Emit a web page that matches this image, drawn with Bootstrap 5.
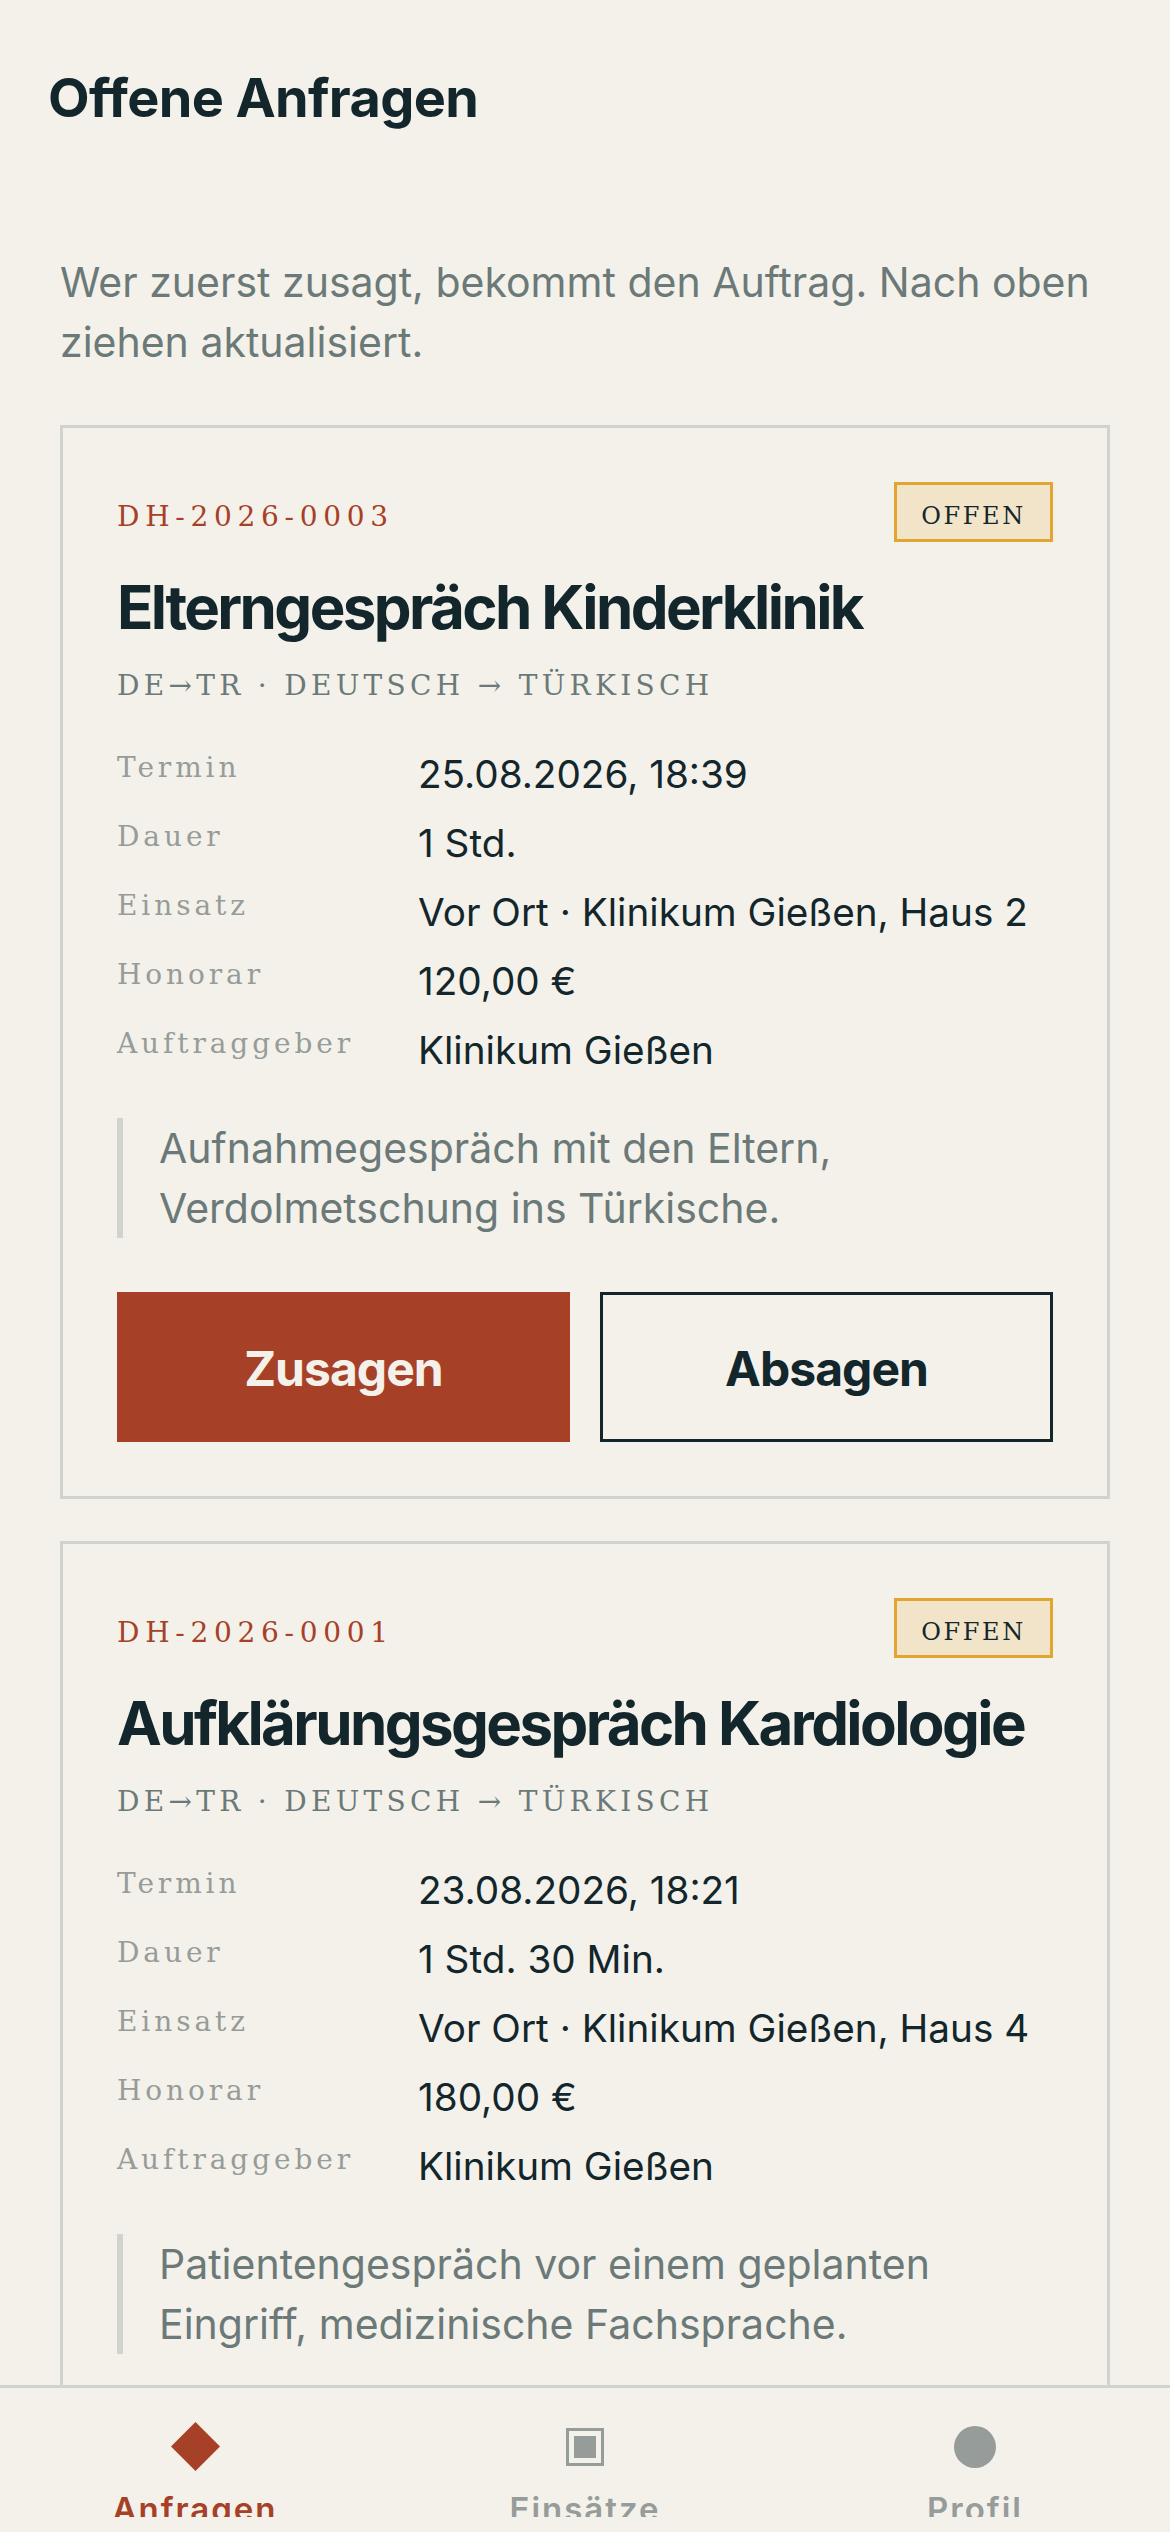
<!doctype html>
<html lang="de">
<head>
<meta charset="utf-8">
<title>Offene Anfragen</title>
<link href="https://cdn.jsdelivr.net/npm/bootstrap@5.3.0/dist/css/bootstrap.min.css" rel="stylesheet">
<style>
html,body{height:2532px;overflow:hidden;background:#f4f1ea}
body{font-family:Inter,"Liberation Sans",sans-serif;color:#12262b}
.app-shell{height:2532px}
.app-main{min-height:0;overflow:hidden}
.page-head{padding:66px 48px 0;height:192px}
.page-title{font-size:54px;font-weight:700;line-height:64px;margin:0;letter-spacing:-.012em}
.intro-text{font-size:41px;line-height:60px;color:#6b7a78;margin:60px 60px 0}
.job-list{margin:53px 60px 0;gap:42px}
.job-card{border:3px solid #d0d4cd;padding:54px;background:transparent}
.mono{font-family:"DejaVu Serif","Liberation Mono",monospace}
.job-code{font-size:28px;letter-spacing:5.7px;color:#a64027;margin-top:9px}
.status-tag{font-size:24px;letter-spacing:2.6px;border:3px solid #e0a630;background:#f2e4c8;height:60px;width:159px;color:#12262b;padding-top:8px}
.job-title{font-size:60px;font-weight:700;letter-spacing:-2.6px;line-height:72px;margin:29px 0 0}
.job-lang{font-size:28px;letter-spacing:4.3px;color:#6b7a78;margin-top:25px;line-height:36px}
.facts{display:grid;grid-template-columns:301px 1fr;row-gap:15px;margin:43px 0 0}
.facts dt{font-family:"DejaVu Serif","Liberation Mono",monospace;font-weight:400;font-size:28px;letter-spacing:3.9px;color:#969c99;line-height:54px;margin-top:-6px}
.facts dd{font-size:38.7px;line-height:54px;margin:0;color:#12262b}
.job-note{border-left:6px solid #d0d4cd;padding-left:36px;font-size:41px;line-height:60px;color:#6b7a78;margin:41px 0 0}
.job-actions{gap:30px;margin-top:54px}
.act-btn{flex:1 1 0;height:150px;border-radius:0;font-size:48px;font-weight:700;letter-spacing:-.02em;border:3px solid #12262b;padding:3px 0 0}
.act-yes,.act-yes:hover{background:#a64027;border-color:#a64027;color:#f4f1ea}
.act-no,.act-no:hover{background:transparent;color:#12262b}
.tab-bar{flex:0 0 147px;border-top:3px solid #d0d4cd;padding-bottom:15px;background:#f4f1ea}
.tab-clip{height:129px;overflow:hidden}
.tab-item{flex:1 1 0;color:#969c99;font-size:33px;font-weight:600;letter-spacing:.06em;padding-top:34px;text-decoration:none}
.tab-item.on{color:#a64027}
.tab-ico{height:49px;display:flex;align-items:center;justify-content:center}
.tab-label{margin-top:18px;line-height:40px}
</style>
</head>
<body>
<div class="app-shell d-flex flex-column">
  <main class="app-main flex-grow-1">
    <header class="page-head"><h1 class="page-title">Offene Anfragen</h1></header>
    <p class="intro-text">Wer zuerst zusagt, bekommt den Auftrag. Nach oben ziehen aktualisiert.</p>
    <div class="job-list d-flex flex-column">
      <article class="job-card">
        <div class="d-flex justify-content-between align-items-center">
          <span class="mono job-code">DH-2026-0003</span>
          <span class="mono status-tag d-flex align-items-center justify-content-center">OFFEN</span>
        </div>
        <h2 class="job-title">Elterngespräch Kinderklinik</h2>
        <div class="mono job-lang">DE→TR · DEUTSCH → TÜRKISCH</div>
        <dl class="facts">
          <dt>Termin</dt><dd>25.08.2026, 18:39</dd>
          <dt>Dauer</dt><dd>1 Std.</dd>
          <dt>Einsatz</dt><dd>Vor Ort · Klinikum Gießen, Haus 2</dd>
          <dt>Honorar</dt><dd>120,00 €</dd>
          <dt>Auftraggeber</dt><dd>Klinikum Gießen</dd>
        </dl>
        <p class="job-note">Aufnahmegespräch mit den Eltern, Verdolmetschung ins Türkische.</p>
        <div class="job-actions d-flex">
          <button type="button" class="btn act-btn act-yes">Zusagen</button>
          <button type="button" class="btn act-btn act-no">Absagen</button>
        </div>
      </article>
      <article class="job-card">
        <div class="d-flex justify-content-between align-items-center">
          <span class="mono job-code">DH-2026-0001</span>
          <span class="mono status-tag d-flex align-items-center justify-content-center">OFFEN</span>
        </div>
        <h2 class="job-title">Aufklärungsgespräch Kardiologie</h2>
        <div class="mono job-lang">DE→TR · DEUTSCH → TÜRKISCH</div>
        <dl class="facts">
          <dt>Termin</dt><dd>23.08.2026, 18:21</dd>
          <dt>Dauer</dt><dd>1 Std. 30 Min.</dd>
          <dt>Einsatz</dt><dd>Vor Ort · Klinikum Gießen, Haus 4</dd>
          <dt>Honorar</dt><dd>180,00 €</dd>
          <dt>Auftraggeber</dt><dd>Klinikum Gießen</dd>
        </dl>
        <p class="job-note">Patientengespräch vor einem geplanten Eingriff, medizinische Fachsprache.</p>
      </article>
    </div>
  </main>
  <nav class="tab-bar">
    <div class="tab-clip d-flex">
      <a class="tab-item on text-center" href="#">
        <div class="tab-ico"><svg width="49" height="49" viewBox="0 0 49 49"><path d="M24.5 0L49 24.5 24.5 49 0 24.5z" fill="#a64027"/></svg></div>
        <div class="tab-label">Anfragen</div>
      </a>
      <a class="tab-item text-center" href="#">
        <div class="tab-ico"><svg width="38" height="38" viewBox="0 0 38 38"><rect x="1.5" y="1.5" width="35" height="35" fill="none" stroke="#969c99" stroke-width="3"/><rect x="8" y="8" width="22" height="22" fill="#969c99"/></svg></div>
        <div class="tab-label">Einsätze</div>
      </a>
      <a class="tab-item text-center" href="#">
        <div class="tab-ico"><svg width="42" height="42" viewBox="0 0 42 42"><circle cx="21" cy="21" r="21" fill="#969c99"/></svg></div>
        <div class="tab-label">Profil</div>
      </a>
    </div>
  </nav>
</div>
</body>
</html>
